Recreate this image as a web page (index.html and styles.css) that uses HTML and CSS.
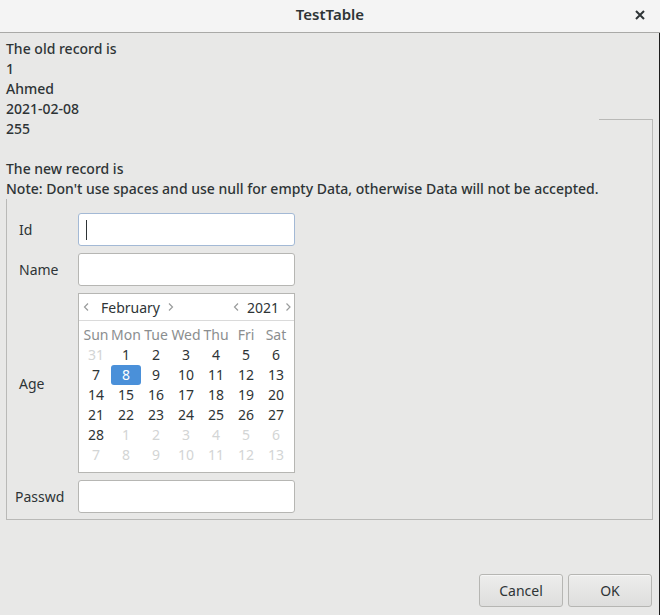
FILE: index.html
```html
<!DOCTYPE html>
<html>
<head>
<meta charset="utf-8">
<link rel="stylesheet" href="styles.css">
</head>
<body>
<div class="window">
  <div class="titlebar">
    <span class="title">TestTable</span>
    <svg class="close" width="10" height="10" viewBox="0 0 10 10"><path d="M1 1L9 9M9 1L1 9" stroke="#2e3436" stroke-width="2" fill="none"/></svg>
  </div>
  <div class="content">
    <div class="info">
      <div class="line">The old record is</div>
      <div class="line">1</div>
      <div class="line">Ahmed</div>
      <div class="line">2021-02-08</div>
      <div class="line">255</div>
      <div class="line">&nbsp;</div>
      <div class="line">The new record is</div>
      <div class="line">Note: Don't use spaces and use null for empty Data, otherwise Data will not be accepted.</div>
    </div>
    <div class="group">
      <div class="form">
        <div class="label">Id</div>
        <div class="input focused"><span class="caret"></span></div>
        <div class="label">Name</div>
        <div class="input"></div>
        <div class="label">Age</div>
        <div class="calendar">
          <div class="cal-head">
            <div class="nav">
              <svg class="arrow" width="14" height="10" viewBox="0 0 14 10"><path d="M9 1.5L5.5 5L9 8.5" stroke="#9a9c9c" stroke-width="1.2" fill="none"/></svg>
              <span class="month">February</span>
              <svg class="arrow" width="14" height="10" viewBox="0 0 14 10"><path d="M5 1.5L8.5 5L5 8.5" stroke="#9a9c9c" stroke-width="1.2" fill="none"/></svg>
            </div>
            <div class="nav">
              <svg class="arrow" width="12" height="10" viewBox="0 0 12 10"><path d="M8 1.5L4.5 5L8 8.5" stroke="#9a9c9c" stroke-width="1.2" fill="none"/></svg>
              <span class="year">2021</span>
              <svg class="arrow" width="12" height="10" viewBox="0 0 12 10"><path d="M4.5 1.5L8 5L4.5 8.5" stroke="#9a9c9c" stroke-width="1.2" fill="none"/></svg>
            </div>
          </div>
          <div class="cal-grid">
            <span class="wd">Sun</span><span class="wd">Mon</span><span class="wd">Tue</span><span class="wd">Wed</span><span class="wd">Thu</span><span class="wd">Fri</span><span class="wd">Sat</span>
            <span class="d o">31</span><span class="d">1</span><span class="d">2</span><span class="d">3</span><span class="d">4</span><span class="d">5</span><span class="d">6</span>
            <span class="d">7</span><span class="d sel">8</span><span class="d">9</span><span class="d">10</span><span class="d">11</span><span class="d">12</span><span class="d">13</span>
            <span class="d">14</span><span class="d">15</span><span class="d">16</span><span class="d">17</span><span class="d">18</span><span class="d">19</span><span class="d">20</span>
            <span class="d">21</span><span class="d">22</span><span class="d">23</span><span class="d">24</span><span class="d">25</span><span class="d">26</span><span class="d">27</span>
            <span class="d">28</span><span class="d o">1</span><span class="d o">2</span><span class="d o">3</span><span class="d o">4</span><span class="d o">5</span><span class="d o">6</span>
            <span class="d o">7</span><span class="d o">8</span><span class="d o">9</span><span class="d o">10</span><span class="d o">11</span><span class="d o">12</span><span class="d o">13</span>
          </div>
        </div>
        <div class="label wide">Passwd</div>
        <div class="input"></div>
      </div>
    </div>
    <div class="footer">
      <div class="btn">Cancel</div>
      <div class="btn">OK</div>
    </div>
  </div>
</div>
</body>
</html>
```
FILE: styles.css
```css
* { box-sizing: border-box; }
html, body { margin: 0; padding: 0; }
body {
  width: 660px;
  height: 615px;
  background: #e8e8e7;
  font-family: "Noto Sans", sans-serif;
  color: #2e3436;
  overflow: hidden;
}
.window {
  display: flex;
  flex-direction: column;
  height: 615px;
}
.titlebar {
  height: 33px;
  flex: none;
  background: #f4f4f4;
  border-bottom: 1px solid #a9a9a7;
  display: flex;
  align-items: flex-start;
  justify-content: center;
  position: relative;
}
.title {
  font-size: 15px;
  font-weight: 600;
  line-height: 28px;
}
.close {
  position: absolute;
  right: 15px;
  top: 10px;
}
.content {
  flex: 1;
  display: flex;
  flex-direction: column;
  border-right: 1px solid #1c1c1c;
}
.info {
  position: relative;
  z-index: 1;
  width: 599px;
  background: #e8e8e7;
  padding: 6px 0 0 6px;
  font-size: 14px;
  font-weight: 500;
  white-space: nowrap;
}
.line {
  height: 20px;
  line-height: 20px;
}
.group {
  margin: -80px 0 0 6px;
  width: 647px;
  height: 401px;
  border: 1px solid #b9b9b7;
  padding: 93px 0 0 12px;
}
.form {
  display: grid;
  grid-template-columns: 59px 217px;
  row-gap: 7px;
  font-size: 14px;
}
.label {
  display: flex;
  align-items: center;
}
.label.wide { margin-left: -4px; }
.input {
  height: 33px;
  background: #fff;
  border: 1px solid #b6b6b3;
  border-radius: 3px;
  display: flex;
  align-items: center;
  padding-left: 7px;
}
.input.focused { border-color: #a3b9d5; }
.caret {
  width: 1px;
  height: 20px;
  background: #2e3436;
}
.calendar {
  height: 180px;
  background: #fff;
  border: 1px solid #b6b6b3;
}
.cal-head {
  height: 27px;
  border-bottom: 1px solid #dadada;
  display: flex;
  justify-content: space-between;
  align-items: center;
}
.nav { display: flex; align-items: center; }
.arrow { display: block; flex: none; }
.month { margin: 0 4px 0 8px; }
.year { margin: 0 3px 0 5px; }
.cal-grid {
  display: grid;
  grid-template-columns: repeat(7, 30px);
  grid-auto-rows: 20px;
  padding: 4px 0 0 2px;
}
.cal-grid span {
  display: flex;
  align-items: center;
  justify-content: center;
  line-height: 20px;
  white-space: nowrap;
}
.wd { color: #8b8e8f; }
.d { color: #2e3436; }
.d.o { color: #d3d5d5; }
.d.sel {
  background: #4a90d9;
  color: #fff;
  border-radius: 3px;
}
.footer {
  margin-top: auto;
  display: flex;
  justify-content: flex-end;
  gap: 5px;
  padding: 0 7px 8px 0;
}
.btn {
  width: 84px;
  height: 33px;
  border: 1px solid #b6b6b3;
  border-radius: 3px;
  background: linear-gradient(#ededec, #dededd);
  font-size: 14px;
  display: flex;
  align-items: center;
  justify-content: center;
  box-shadow: inset 0 1px #f6f6f6;
}
```
